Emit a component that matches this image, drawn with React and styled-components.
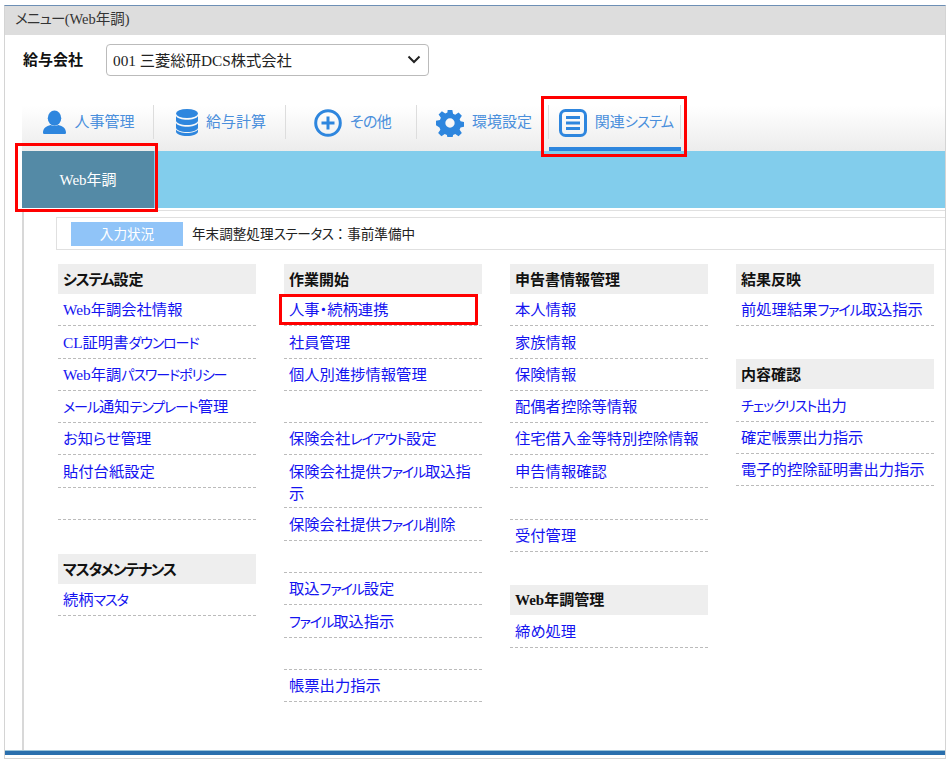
import React from "react";
import styled, { createGlobalStyle } from "styled-components";

const GlobalStyle = createGlobalStyle`
  html, body { margin: 0; padding: 0; background: #fff; }
  body {
    font-family: "Liberation Serif", "Noto Sans CJK JP", serif;
    font-size: 15px;
    font-feature-settings: "palt";
    color: #111;
  }
`;

const Kana = styled.span`
  font-feature-settings: "palt";
  font-size: 0.92em;
  letter-spacing: -0.08em;
`;

const Page = styled.div`
  width: 951px;
  height: 762px;
  padding: 5px 5px 3px 4px;
  box-sizing: border-box;
  overflow: hidden;
`;

const Win = styled.div`
  height: 100%;
  box-sizing: border-box;
  display: flex;
  flex-direction: column;
  border-top: 1px solid #6d8fb5;
  border-left: 1px solid #d4d4d4;
  border-right: 1px solid #d4d4d4;
  border-bottom: 1px solid #d4d4d4;
`;

const TitleBar = styled.div`
  height: 29px;
  flex: none;
  background: #ddd;
  padding-left: 10px;
  font-size: 14.5px;
  line-height: 27px;
  color: #333;
  ${Kana} { font-size: 1em; letter-spacing: -0.05em; }
`;

const CompanyRow = styled.div`
  height: 63px;
  flex: none;
  display: flex;
  align-items: flex-start;
  padding: 9px 0 0 18px;
  box-sizing: border-box;
`;

const CompanyLabel = styled.span`
  width: 83px;
  font-family: "Noto Sans CJK JP", sans-serif;
  font-size: 15px;
  font-weight: 700;
  line-height: 30px;
  color: #111;
`;

const CompanySelect = styled.div`
  width: 323px;
  height: 32px;
  box-sizing: border-box;
  display: flex;
  align-items: center;
  justify-content: space-between;
  padding: 0 7px 2px 6px;
  border: 1px solid #bbb;
  border-radius: 4px;
  font-size: 15.3px;
  color: #222;
  background: #fff;
`;

const TabBar = styled.div`
  height: 53px;
  flex: none;
  margin-left: 17px;
  display: flex;
  background: linear-gradient(#fff 0%, #fff 15%, #ececec 100%);
`;

const Tab = styled.div`
  position: relative;
  width: ${(p) => p.$w}px;
  flex: none;
  display: flex;
  align-items: center;
  justify-content: center;
  gap: 8px;
  padding: 0 0 4px 2px;
  box-sizing: border-box;
  color: #4a8fdc;
  font-family: "Noto Sans CJK JP", sans-serif;
  font-size: 15px;
  &::after {
    content: "";
    position: absolute;
    right: 0;
    top: 7px;
    height: 34px;
    border-right: 1px solid #ddd;
  }
`;

const TabLabel = styled.span`
  position: relative;
  top: -2px;
  letter-spacing: ${(p) => (p.$tight ? "-0.7px" : "0")};
  ${Kana} { font-size: 0.95em; letter-spacing: -0.06em; }
`;

const ActiveLine = styled.div`
  position: absolute;
  left: 0;
  right: 0;
  bottom: 0;
  height: 4px;
  background: #2e86de;
`;

const RedBox = styled.div`
  position: absolute;
  inset: ${(p) => p.$inset};
  border: 3px solid #f00;
  pointer-events: none;
`;

const Band = styled.div`
  height: 57px;
  flex: none;
  margin-left: 17px;
  display: flex;
  background: #82cdec;
`;

const BandTile = styled.div`
  position: relative;
  width: 132px;
  display: flex;
  align-items: center;
  justify-content: center;
  padding-bottom: 3px;
  box-sizing: border-box;
  background: #548aa6;
  color: #fff;
  font-size: 15px;
`;

const Body = styled.div`
  flex: 1;
  margin: 2px 0 0 17px;
  border-top: 1px solid #e0e0e0;
  border-left: 2px solid #d8d8d8;
  padding: 6px 0 0 32px;
  min-height: 0;
`;

const StatusBox = styled.div`
  height: 33px;
  box-sizing: border-box;
  display: flex;
  align-items: center;
  gap: 9px;
  padding-left: 14px;
  border: 1px solid #e0e0e0;
  border-right: none;
`;

const StatusBadge = styled.span`
  width: 112px;
  height: 24px;
  padding-bottom: 2px;
  box-sizing: border-box;
  display: flex;
  align-items: center;
  justify-content: center;
  background: #90c4f8;
  color: #fff;
  font-family: "Noto Sans CJK JP", sans-serif;
  font-size: 13.6px;
`;

const StatusText = styled.span`
  padding-bottom: 2px;
  font-family: "Noto Sans CJK JP", sans-serif;
  font-feature-settings: normal;
  font-size: 13.6px;
  color: #222;
  ${Kana} { font-size: 1em; letter-spacing: -0.03em; }
`;

const Columns = styled.div`
  display: grid;
  grid-template-columns: repeat(4, 198px);
  column-gap: 28px;
  margin: 14px 0 0 2px;
`;

const Column = styled.div`
  display: flex;
  flex-direction: column;
`;

const Head = styled.div`
  height: 30px;
  flex: none;
  margin-top: ${(p) => p.$top ?? 0}px;
  background: #eee;
  padding-left: 5px;
  font-family: ${(p) => (p.$serif ? '"Liberation Serif", "Noto Sans CJK JP", serif' : '"Noto Sans CJK JP", sans-serif')};
  font-size: 15px;
  font-weight: 700;
  line-height: ${(p) => (p.$serif ? 31 : 29)}px;
  color: #111;
  ${Kana} { font-size: 1em; letter-spacing: -0.08em; }
`;

const Row = styled.div`
  position: relative;
  min-height: 32.3px;
  border-bottom: 1px dashed #bbb;
  padding: 5.3px 4px 2.7px 5px;
  box-sizing: border-box;
  font-size: 15.3px;
  line-height: 22px;
  color: #1414f0;
`;

const BottomBar = styled.div`
  height: 4px;
  flex: none;
  margin-bottom: 3px;
  background: #2a6fad;
  border-top: 1px solid #9cc3d8;
`;

// katakana in the original is set much narrower than the kanji around it
const narrowKana = (text) =>
  text.split(/([ァ-ヶー]+|\n)/).map((part, i) => {
    if (part === "\n") return <br key={i} />;
    return i % 2 ? <Kana key={i}>{part}</Kana> : part;
  });

const person = (
  <svg width="23" height="25" viewBox="0 0 24 26" fill="#2e86de">
    <ellipse cx="12" cy="8.500" rx="7" ry="8" />
    <path d="M1 25c-.8 0-1-.6-1-1.500C0 19 3.500 16.500 8 15.500c2.500 1.400 5.500 1.400 8 0 4.500 1 8 3.500 8 8 0 .9-.2 1.500-1 1.500z" />
  </svg>
);

const database = (
  <svg width="22" height="27" viewBox="0 0 22 27" fill="#2e86de">
    <ellipse cx="11" cy="4.500" rx="11" ry="4.500" />
    <path d="M0 7c1.500 2.500 6 3.800 11 3.800S20.500 9.500 22 7v4.500c0 2.500-5 4.500-11 4.500S0 14 0 11.500z" />
    <path d="M0 14c1.500 2.500 6 3.800 11 3.800S20.500 16.500 22 14v4.500C22 21 17 23 11 23S0 21 0 18.500z" />
    <path d="M0 20.500c1.500 2.300 6 3.500 11 3.500s9.500-1.200 11-3.500v2C22 25 17 27 11 27S0 25 0 22.500z" />
  </svg>
);

const plusCircle = (
  <svg width="28" height="28" viewBox="0 0 28 28" fill="none" stroke="#2e86de">
    <circle cx="14" cy="14" r="12.300" strokeWidth="3" />
    <path d="M14 7.500v13M7.500 14h13" strokeWidth="3" />
  </svg>
);

const gear = (
  <svg width="28" height="28" viewBox="-1 -1 30 30" fill="#2e86de">
    <path
      fillRule="evenodd"
      d="M11.500 0h5l.8 4.200 2.300 1 3.600-2.400 3.500 3.500-2.400 3.600 1 2.300 4.200.8v5l-4.200.8-1 2.300 2.400 3.600-3.500 3.500-3.600-2.400-2.300 1-.8 4.200h-5l-.8-4.200-2.300-1-3.600 2.400-3.500-3.500 2.400-3.600-1-2.300L-1 16.500v-5l4.200-.8 1-2.300L1.800 4.800l3.500-3.500 3.600 2.400 2.300-1zM14 9a5 5 0 1 0 0 10 5 5 0 0 0 0-10z"
    />
  </svg>
);

const listBox = (
  <svg width="28" height="28" viewBox="0 0 28 28" fill="none">
    <rect x="1.500" y="1.500" width="25" height="25" rx="5" stroke="#2e86de" strokeWidth="3" />
    <path d="M7 8.500h14M7 14h14M7 19.500h14" stroke="#2e86de" strokeWidth="3" />
  </svg>
);

const chevron = (
  <svg width="14" height="9" viewBox="0 0 14 9" fill="none">
    <path d="M1.500 1.500 7 7l5.500-5.500" stroke="#222" strokeWidth="2" />
  </svg>
);

const tabs = [
  { label: "人事管理", icon: person, w: 132 },
  { label: "給与計算", icon: database, w: 132 },
  { label: "その他", icon: plusCircle, w: 131, tight: true },
  { label: "環境設定", icon: gear, w: 132 },
];

const columns = [
  [
    { head: "システム設定" },
    "Web年調会社情報",
    "CL証明書ダウンロード",
    "Web年調パスワードポリシー",
    "メール通知テンプレート管理",
    "お知らせ管理",
    "貼付台紙設定",
    "",
    { head: "マスタメンテナンス", top: 34 },
    "続柄マスタ",
  ],
  [
    { head: "作業開始" },
    { label: "人事・続柄連携", marked: true },
    "社員管理",
    "個人別進捗情報管理",
    "",
    "保険会社レイアウト設定",
    "保険会社提供ファイル取込指\n示",
    "保険会社提供ファイル削除",
    "",
    "取込ファイル設定",
    "ファイル取込指示",
    "",
    "帳票出力指示",
  ],
  [
    { head: "申告書情報管理" },
    "本人情報",
    "家族情報",
    "保険情報",
    "配偶者控除等情報",
    "住宅借入金等特別控除情報",
    "申告情報確認",
    "",
    "受付管理",
    { head: "Web年調管理", top: 33, serif: true },
    "締め処理",
  ],
  [
    { head: "結果反映" },
    "前処理結果ファイル取込指示",
    { head: "内容確認", top: 33 },
    "チェックリスト出力",
    "確定帳票出力指示",
    "電子的控除証明書出力指示",
  ],
];

export default function App() {
  return (
    <>
      <GlobalStyle />
      <Page>
        <Win>
          <TitleBar>{narrowKana("メニュー(Web年調)")}</TitleBar>
          <CompanyRow>
            <CompanyLabel>給与会社</CompanyLabel>
            <CompanySelect>
              <span>001 三菱総研DCS株式会社</span>
              {chevron}
            </CompanySelect>
          </CompanyRow>
          <TabBar>
            {tabs.map((t) => (
              <Tab key={t.label} $w={t.w}>
                {t.icon}
                <TabLabel $tight={t.tight}>{t.label}</TabLabel>
              </Tab>
            ))}
            <Tab $w={132}>
              {listBox}
              <TabLabel>{narrowKana("関連システム")}</TabLabel>
              <ActiveLine />
              <RedBox $inset="-2px -6px -6px -8px" />
            </Tab>
          </TabBar>
          <Band>
            <BandTile>
              Web年調
              <RedBox $inset="-8px -4px -4px -7px" />
            </BandTile>
          </Band>
          <Body>
            <StatusBox>
              <StatusBadge>入力状況</StatusBadge>
              <StatusText>{narrowKana("年末調整処理ステータス：事前準備中")}</StatusText>
            </StatusBox>
            <Columns>
              {columns.map((col, i) => (
                <Column key={i}>
                  {col.map((item, j) => {
                    if (item.head) {
                      return (
                        <Head key={j} $top={item.top} $serif={item.serif}>
                          {narrowKana(item.head)}
                        </Head>
                      );
                    }
                    if (item.marked) {
                      return (
                        <Row key={j}>
                          {item.label}
                          <RedBox $inset="0 4px 0 -5px" />
                        </Row>
                      );
                    }
                    return <Row key={j}>{narrowKana(item)}</Row>;
                  })}
                </Column>
              ))}
            </Columns>
          </Body>
          <BottomBar />
        </Win>
      </Page>
    </>
  );
}
